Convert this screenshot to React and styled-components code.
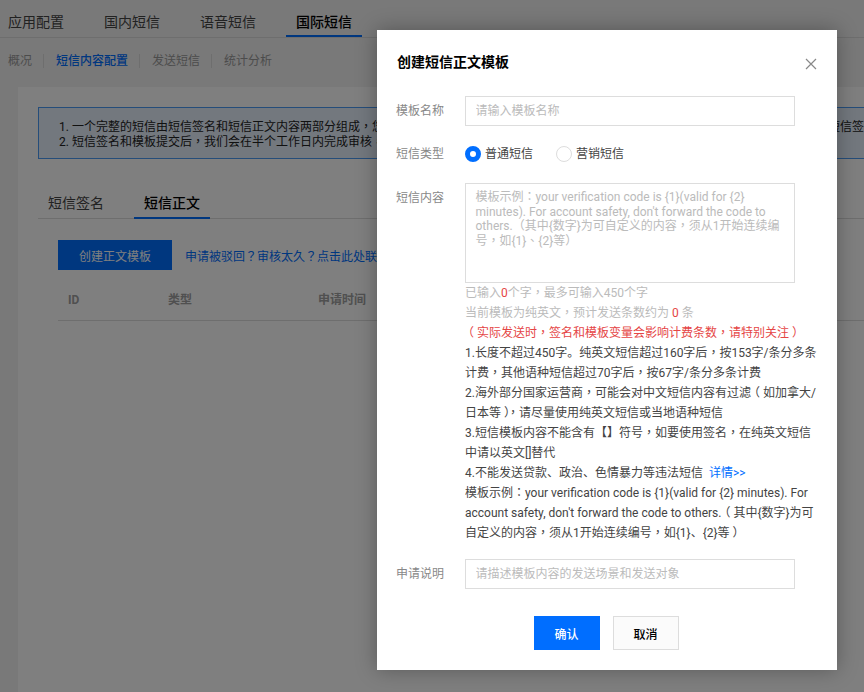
import React from "react";
import styled, { createGlobalStyle } from "styled-components";

const Global = createGlobalStyle`
  html, body { margin: 0; padding: 0; height: 100%; }
  body { font-family: Roboto, "Noto Sans CJK SC", sans-serif; font-size: 12px; color: #444; background: #f2f2f2; }
  * { box-sizing: border-box; }
`;

const Page = styled.div`
  height: 692px; width: 864px; overflow: hidden; position: relative; background: #f2f2f2;
`;
const TopTabs = styled.nav`
  display: flex; height: 38px; border-bottom: 1px solid #ddd; padding-left: 8px; gap: 40px;
`;
const TopTab = styled.a`
  position: relative; height: 37px; line-height: 44px; font-size: 14px; color: ${p => (p.$active ? "#000" : "#444")};
  font-weight: ${p => (p.$active ? 500 : 400)}; white-space: nowrap;
  ${p => p.$active && `
    &::after { content: ""; position: absolute; left: -10px; right: -10px; bottom: 0; height: 2px; background: #006eff; }
  `}
`;
const SubNav = styled.nav`
  display: flex; height: 49px; align-items: center; padding: 0 0 4px 8px;
`;
const SubItem = styled.a`
  font-size: 12px; line-height: 14px; white-space: nowrap; color: ${p => (p.$active ? "#006eff" : "#999")};
  font-weight: ${p => (p.$active ? 500 : 400)};
  padding-right: 11px; margin-right: 12px; border-right: ${p => (p.$last ? "0" : "1px solid #ddd")};
`;
const Card = styled.section`
  margin-left: 18px; width: 900px; height: 620px; background: #fff; padding: 20px;
`;
const Notice = styled.div`
  width: 900px; height: 52px; border: 1px solid #4a9bf5; background: #e6f0fd; padding: 12px 20px 0;
  font-size: 12px; line-height: 15px; color: #222; white-space: nowrap;
`;
const CardTabs = styled.div`
  display: flex; margin-top: 27px; height: 33px; gap: 40px; padding-left: 10px; border-bottom: 1px solid #ddd; width: 900px;
`;
const CardTab = styled.a`
  position: relative; height: 32px; line-height: 34px; font-size: 14px; color: ${p => (p.$active ? "#000" : "#444")};
  font-weight: ${p => (p.$active ? 500 : 400)};
  ${p => p.$active && `
    &::after { content: ""; position: absolute; left: -10px; right: -10px; bottom: -1px; height: 2px; background: #006eff; }
  `}
`;
const Toolbar = styled.div`
  display: flex; align-items: center; margin: 21px 0 0 20px; gap: 13px;
`;
const PrimaryBlock = styled.button`
  width: 114px; height: 30px; border: 0; background: #006eff; color: #fff; font: inherit; font-size: 12px; padding: 0;
`;
const HelpLink = styled.a`
  color: #006eff; font-size: 12px; white-space: nowrap;
`;
const TableHead = styled.div`
  display: grid; grid-template-columns: 100px 150px 200px; margin-left: 20px; width: 860px; height: 51px; align-items: end;
  border-bottom: 1px solid #ddd; padding: 0 0 12px 10px; font-weight: 700; font-size: 12px; line-height: 16px; color: #a0a0a0;
`;

const Backdrop = styled.div`
  position: absolute; inset: 0; background: rgba(0, 0, 0, .5);
`;
const Modal = styled.div`
  position: absolute; left: 377px; top: 30px; width: 460px; height: 640px; background: #fff;
  box-shadow: 0 0 20px rgba(0, 0, 0, .3); padding: 24px 20px 0;
`;
const Title = styled.h2`
  margin: 0; font-size: 14px; line-height: 16px; font-weight: 700; color: #000;
`;
const Close = styled.button`
  position: absolute; right: 20px; top: 28px; width: 12px; height: 12px; padding: 0; border: 0; background: none; display: flex;
`;
const Row = styled.div`
  display: flex; margin-top: ${p => p.$mt || 0}px; align-items: ${p => (p.$top ? "flex-start" : "center")};
`;
const Label = styled.label`
  width: 68px; flex: none; color: #888; font-size: 12px; line-height: 16px; padding-top: ${p => (p.$top ? 7 : 0)}px; white-space: nowrap;
  margin-left: -1px; margin-right: 1px;
`;
const TextInput = styled.input`
  width: 330px; height: 30px; border: 1px solid #ddd; padding: 0 9.5px; font: inherit; font-size: 12px; outline: 0;
  &::placeholder { color: #bbb; opacity: 1; }
`;
const TextArea = styled.textarea`
  display: block; width: 330px; height: 100px; border: 1px solid #ddd; padding: 6px 9.5px; outline: 0; resize: none;
  font-family: Roboto, "Noto Sans CJK TC", sans-serif; font-size: 12px; line-height: 14.6px;
  &::placeholder { color: #bbb; opacity: 1; }
`;
const RadioGroup = styled.div`
  display: flex; align-items: center;
`;
const RadioItem = styled.span`
  display: flex; align-items: center; gap: 4px; width: 91px; color: #444; font-size: 12px; line-height: 16px;
`;
const RadioDot = styled.i`
  width: 16px; height: 16px; border-radius: 50%; flex: none; background: #fff;
  border: ${p => (p.$on ? "5px solid #006eff" : "1px solid #ddd")};
`;
const Body = styled.div`
  width: 352px; font-size: 12px; line-height: 20px; color: #444;
`;
const Muted = styled.div` color: #bbb; `;
const Red = styled.span` color: #e54545; `;
const Warn = styled.div` color: #e54545; `;
const More = styled.a` color: #006eff; margin-left: 3px; `;
const Actions = styled.div`
  display: flex; justify-content: center; gap: 13px; margin-top: 27px; padding-right: 2px;
`;
const Btn = styled.button`
  width: 66px; height: 34px; font: inherit; font-size: 12px; font-weight: 500; padding: 0;
  border: ${p => (p.$primary ? "0" : "1px solid #ddd")};
  background: ${p => (p.$primary ? "#006eff" : "#fbfbfb")};
  color: ${p => (p.$primary ? "#fff" : "#000")};
`;
const PunctMark = styled.span`
  font-family: "Noto Sans CJK TC", sans-serif; line-height: 0;
  margin-left: ${p => p.$shift}px; margin-right: ${p => -p.$shift}px;
`;

/* The reference's CJK font centres full-width punctuation; the TC face plus a small shift does the same. */
const SHIFT = { "（": -3, "）": 3 };
function Zh({ children }) {
  return String(children)
    .split(/([，：（）？])/)
    .map((part, i) => (i % 2 ? <PunctMark key={i} $shift={SHIFT[part] || 0}>{part}</PunctMark> : part));
}

export default function App() {
  return (
    <Page>
      <Global />
      <TopTabs>
        <TopTab>应用配置</TopTab>
        <TopTab>国内短信</TopTab>
        <TopTab>语音短信</TopTab>
        <TopTab $active>国际短信</TopTab>
      </TopTabs>
      <SubNav>
        <SubItem>概况</SubItem>
        <SubItem $active>短信内容配置</SubItem>
        <SubItem>发送短信</SubItem>
        <SubItem $last>统计分析</SubItem>
      </SubNav>
      <Card>
        <Notice>
          <Zh>1. 一个完整的短信由短信签名和短信正文内容两部分组成，您可以根据业务需要分别设置不同的短信正文内容和短信签名进行组合，并形成最终的短信签名</Zh>
          <br />
          <Zh>2. 短信签名和模板提交后，我们会在半个工作日内完成审核，审核结果将通过站内信通知您</Zh>
        </Notice>
        <CardTabs>
          <CardTab>短信签名</CardTab>
          <CardTab $active>短信正文</CardTab>
        </CardTabs>
        <Toolbar>
          <PrimaryBlock>创建正文模板</PrimaryBlock>
          <HelpLink><Zh>申请被驳回？审核太久？点击此处联系我们</Zh></HelpLink>
        </Toolbar>
        <TableHead>
          <span>ID</span>
          <span>类型</span>
          <span>申请时间</span>
        </TableHead>
      </Card>
      <Backdrop />
      <Modal>
        <Title>创建短信正文模板</Title>
        <Close aria-label="关闭">
          <svg width="12" height="12" viewBox="0 0 12 12" fill="none" stroke="#888" strokeWidth="1.2">
            <path d="M1 1l10 10M11 1L1 11" />
          </svg>
        </Close>
        <Row $mt={26}>
          <Label>模板名称</Label>
          <TextInput placeholder="请输入模板名称" />
        </Row>
        <Row $mt={20}>
          <Label>短信类型</Label>
          <RadioGroup>
            <RadioItem><RadioDot $on />普通短信</RadioItem>
            <RadioItem><RadioDot />营销短信</RadioItem>
          </RadioGroup>
        </Row>
        <Row $mt={21} $top>
          <Label $top>短信内容</Label>
          <div>
            <TextArea placeholder="模板示例：your verification code is {1}(valid for {2} minutes). For account safety, don't forward the code to others.（其中{数字}为可自定义的内容，须从1开始连续编号，如{1}、{2}等）" />
            <Body>
              <Muted>已输入<Red>0</Red>个字<Zh>，</Zh>最多可输入450个字</Muted>
              <Muted><Zh>当前模板为纯英文，预计发送条数约为 </Zh><Red>0</Red> 条</Muted>
              <Warn><Zh>（实际发送时，签名和模板变量会影响计费条数，请特别关注）</Zh></Warn>
              <div><Zh>1.长度不超过450字。纯英文短信超过160字后，按153字/条分多条计费，其他语种短信超过70字后，按67字/条分多条计费</Zh></div>
              <div><Zh>2.海外部分国家运营商，可能会对中文短信内容有过滤（如加拿大/日本等），请尽量使用纯英文短信或当地语种短信</Zh></div>
              <div><Zh>3.短信模板内容不能含有【】符号，如要使用签名，在纯英文短信中请以英文[]替代</Zh></div>
              <div>4.不能发送贷款、政治、色情暴力等违法短信 <More>详情&gt;&gt;</More></div>
              <div><Zh>{"模板示例：your verification code is {1}(valid for {2} minutes). For account safety, don't forward the code to others.（其中{数字}为可自定义的内容，须从1开始连续编号，如{1}、{2}等）"}</Zh></div>
            </Body>
          </div>
        </Row>
        <Row $mt={16}>
          <Label>申请说明</Label>
          <TextInput placeholder="请描述模板内容的发送场景和发送对象" />
        </Row>
        <Actions>
          <Btn $primary>确认</Btn>
          <Btn>取消</Btn>
        </Actions>
      </Modal>
    </Page>
  );
}
